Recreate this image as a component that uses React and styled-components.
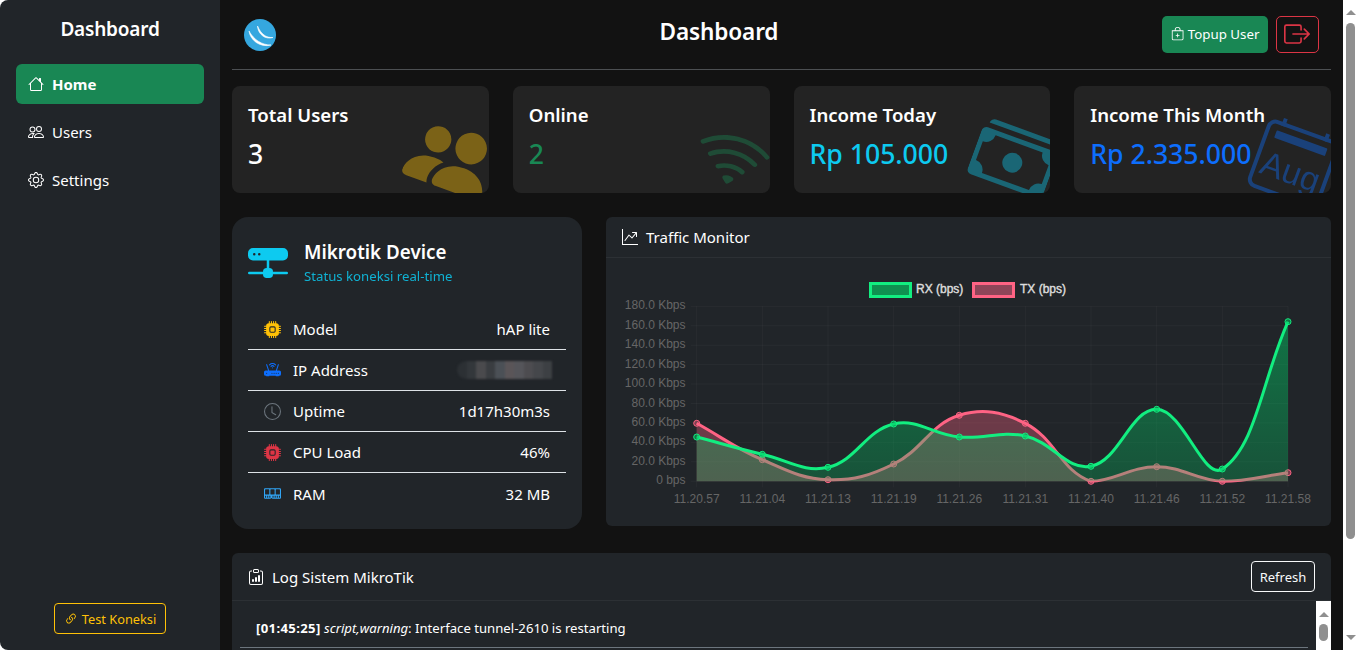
import React from 'react'
import styled, { createGlobalStyle } from 'styled-components'
import {
  BsHouse, BsPeople, BsGear, BsLink45Deg, BsBagPlus, BsBoxArrowRight, BsPeopleFill, BsWifi, BsCashStack,
  BsHddNetworkFill, BsCpuFill, BsRouterFill, BsClock, BsMemory, BsGraphUpArrow, BsClipboardData,
} from 'react-icons/bs'

const GlobalStyle = createGlobalStyle`
  html, body { margin: 0; height: 100%; background: #fff; overflow: hidden; }
  body { font-family: "Noto Sans", "Open Sans", sans-serif; color: #fff; font-size: 15px; }
  * { box-sizing: border-box; }
`

const Shell = styled.div`
  display: flex;
  height: 650px;
  border-radius: 8px 0 8px 8px;
  overflow: hidden;
`

const Sidebar = styled.aside`
  width: 220px;
  flex: none;
  background: #212529;
  display: flex;
  flex-direction: column;
  padding: 16px 16px 16px;
`

const Brand = styled.div`
  font-size: 19px;
  letter-spacing: -.2px;
  font-weight: 600;
  text-align: center;
  line-height: 26px;
  margin-bottom: 22px;
`

const NavItem = styled.a`
  display: flex;
  align-items: center;
  gap: 8px;
  height: 40px;
  padding: 0 12px;
  margin-bottom: 8px;
  border-radius: 6px;
  font-size: 15px;
  font-weight: ${p => (p.$active ? 700 : 400)};
  background: ${p => (p.$active ? '#198754' : 'transparent')};
  svg { font-size: 16px; }
`

const TestButton = styled.button`
  margin: auto auto 0;
  height: 31px;
  width: 112px;
  display: flex;
  align-items: center;
  justify-content: center;
  gap: 4px;
  background: transparent;
  border: 1px solid #ffc107;
  border-radius: 4px;
  color: #ffc107;
  font: 12.8px "Noto Sans", sans-serif;
  svg { font-size: 14px; }
`

const Main = styled.main`
  flex: 1;
  min-width: 0;
  height: 650px;
  overflow: hidden;
  background: #121212;
  padding: 0 12px 12px;
`

// the page scrollbar as the reference shows it
const ScrollBar = styled.div`
  flex: none;
  width: 15px;
  background: #fff;
  display: flex;
  flex-direction: column;
  align-items: center;
  height: ${p => (p.$h ? `${p.$h}px` : '100%')};
  padding-top: ${p => p.$pad}px;
`

const Arrow = styled.i`
  width: 0;
  height: 0;
  border-left: 5px solid transparent;
  border-right: 5px solid transparent;
  border-${p => (p.$down ? 'top' : 'bottom')}: 5px solid #8f8f8f;
  margin-top: ${p => (p.$down ? 'auto' : '0')};
  margin-bottom: ${p => (p.$down ? '10px' : '0')};
`

const Thumb = styled.i`
  width: 9px;
  border-radius: 5px;
  background: #8f8f8f;
  height: ${p => p.$h}px;
  margin-top: ${p => p.$top}px;
`

const Header = styled.header`
  display: flex;
  align-items: center;
  justify-content: space-between;
  height: 70px;
  padding: 0 12px;
  border-bottom: 1px solid #4c4f52;
  margin-bottom: 16px;
`

const PageTitle = styled.h1`
  margin: 0 0 6px;
  font-size: 22.6px;
  letter-spacing: -.15px;
  font-weight: 600;
`

const Actions = styled.div`
  display: flex;
  gap: 8px;
  margin-top: -1px;
`

const TopupButton = styled.button`
  height: 37px;
  width: 106px;
  display: flex;
  align-items: center;
  justify-content: center;
  gap: 4px;
  background: #198754;
  border: 0;
  border-radius: 5px;
  color: #fff;
  font: 13.3px "Noto Sans", sans-serif;
`

const LogoutButton = styled.button`
  height: 37px;
  width: 43px;
  display: flex;
  align-items: center;
  justify-content: center;
  background: transparent;
  border: 1px solid #dc3545;
  border-radius: 5px;
  color: #dc3545;
  font-size: 26px;
  padding: 0;
`

const StatGrid = styled.section`
  display: grid;
  grid-template-columns: repeat(4, 1fr);
  gap: 24px;
  margin-bottom: 24px;
`

const StatCard = styled.div`
  position: relative;
  overflow: hidden;
  height: 107px;
  padding: 16px;
  border-radius: 8px;
  background: #232323;
`

const StatTitle = styled.div`
  font-size: 18.6px;
  font-weight: 600;
  line-height: 26px;
`

const StatValue = styled.div`
  font-size: 26.6px;
  font-weight: 500;
  line-height: 38px;
  margin-top: 7px;
  color: ${p => p.$color};
  position: relative;
`

const StatIcon = styled.div`
  position: absolute;
  right: ${p => p.$right}px;
  bottom: ${p => p.$bottom}px;
  color: ${p => p.$color};
  opacity: .4;
  font-size: ${p => p.$size}px;
  line-height: 0;
  transform: rotate(${p => p.$rotate}deg);
`

const MiddleRow = styled.section`
  display: flex;
  align-items: flex-start;
  gap: 24px;
  margin-bottom: 24px;
`

const DeviceCard = styled.div`
  width: 350px;
  flex: none;
  height: 312px;
  padding: 16px;
  border-radius: 16px;
  background: #212529;
`

const DeviceHead = styled.div`
  display: flex;
  align-items: center;
  gap: 16px;
  margin-bottom: 23px;
  padding-top: 6px;
  svg { font-size: 40px; color: #0dcaf0; }
`

const DeviceName = styled.div`
  font-size: 18.8px;
  font-weight: 600;
  line-height: 26px;
`

const DeviceSub = styled.div`
  font-size: 13.2px;
  color: #0dcaf0;
  line-height: 20px;
  opacity: .85;
  margin-top: 1px;
`

const InfoRow = styled.div`
  display: flex;
  align-items: center;
  height: 41px;
  padding: 0 16px;
  border-bottom: ${p => (p.$last ? 'none' : '1px solid #dee2e6')};
  font-size: 15px;
`

const InfoIcon = styled.span`
  display: flex;
  color: ${p => p.$color};
  font-size: 17px;
  margin-right: 12px;
`

const InfoValue = styled.span`
  margin-left: auto;
`

const Masked = styled.span`
  margin-left: auto;
  margin-right: -2px;
  display: flex;
  height: 18px;
  width: 95px;
  filter: blur(.8px);
  border-radius: 9px 0 0 9px;
  overflow: hidden;
`

const MaskCell = styled.i`
  flex: 1;
  background: ${p => p.$c};
`

const ChartCard = styled.div`
  flex: 1;
  min-width: 0;
  border-radius: 6px;
  background: #212529;
`

const CardHeader = styled.div`
  display: flex;
  align-items: center;
  justify-content: space-between;
  padding: 0 16px;
  height: ${p => p.$h}px;
  border-bottom: 1px solid #2c3034;
  font-size: 15px;
`

const CardTitle = styled.div`
  display: flex;
  align-items: center;
  gap: 8px;
  svg { font-size: 16px; }
`

const ChartWrap = styled.div`
  padding: 16px 16px 0;
  svg { display: block; }
  text { font-family: "Liberation Sans", Arial, sans-serif; font-size: 12px; }
`

const LogCard = styled.div`
  border-radius: 6px;
  background: #212529;
`

const RefreshButton = styled.button`
  height: 31px;
  width: 64px;
  background: transparent;
  border: 1px solid #f8f9fa;
  border-radius: 4px;
  color: #f8f9fa;
  font: 13px "Noto Sans", sans-serif;
  padding: 0;
`

const LogBody = styled.div`
  display: flex;
  height: 200px;
`

const LogList = styled.div`
  flex: 1;
  min-width: 0;
  padding: 8px;
`

const LogRow = styled.div`
  padding: 8px 16px;
  line-height: 22px;
  font-size: 13.15px;
  border-bottom: 1px solid #6c757d;
  white-space: nowrap;
  b { font-weight: 700; letter-spacing: .35px; }
`

// chart is laid out in page pixels, shifted to the svg origin
const OX = 622
const OY = 274
const xs = [696.7, 762.3, 828, 893.7, 959.3, 1025.3, 1091, 1156.7, 1222.3, 1288]
const xLabels = ['11.20.57', '11.21.04', '11.21.13', '11.21.19', '11.21.26', '11.21.31', '11.21.40', '11.21.46', '11.21.52', '11.21.58']
const yLabels = ['180.0 Kbps', '160.0 Kbps', '140.0 Kbps', '120.0 Kbps', '100.0 Kbps', '80.0 Kbps', '60.0 Kbps', '40.0 Kbps', '20.0 Kbps', '0 bps']
const rx = [437, 454.3, 467.3, 424, 437, 436, 466.3, 409.3, 469, 321.7]
const tx = [423.3, 459.7, 479.7, 464, 415.3, 423.3, 481.3, 466.7, 481.3, 472.7]
const TOP = 306.3
const BOTTOM = 481.3

// same spline chart.js uses for tension .4
function splinePath(ys) {
  const pts = xs.map((x, i) => ({ x: x - OX, y: ys[i] - OY }))
  const bottom = BOTTOM - OY
  const ctrl = pts.map((p, i) => {
    const prev = pts[i - 1] || p
    const next = pts[i + 1] || p
    const d1 = Math.hypot(p.x - prev.x, p.y - prev.y)
    const d2 = Math.hypot(next.x - p.x, next.y - p.y)
    const sum = d1 + d2 || 1
    return {
      inX: p.x - 0.4 * (d1 / sum) * (next.x - prev.x),
      inY: Math.min(bottom, p.y - 0.4 * (d1 / sum) * (next.y - prev.y)),
      outX: p.x + 0.4 * (d2 / sum) * (next.x - prev.x),
      outY: Math.min(bottom, p.y + 0.4 * (d2 / sum) * (next.y - prev.y)),
    }
  })
  let d = `M${pts[0].x} ${pts[0].y}`
  for (let i = 1; i < pts.length; i++) {
    d += ` C${ctrl[i - 1].outX} ${ctrl[i - 1].outY} ${ctrl[i].inX} ${ctrl[i].inY} ${pts[i].x} ${pts[i].y}`
  }
  return d
}

const Series = ({ ys, color, fill, dot }) => {
  const line = splinePath(ys)
  const area = `${line} L${xs[9] - OX} ${BOTTOM - OY} L${xs[0] - OX} ${BOTTOM - OY} Z`
  return (
    <g>
      <path d={area} fill={fill} />
      <path d={line} fill="none" stroke={color} strokeWidth="3" />
      {ys.map((y, i) => (
        <circle key={i} cx={xs[i] - OX} cy={y - OY} r="3" fill={dot} stroke={color} strokeWidth="1" />
      ))}
    </g>
  )
}

const TrafficChart = () => (
  <svg width="693" height="252" viewBox="0 0 693 252">
    <defs>
      <linearGradient id="rxFill" gradientUnits="userSpaceOnUse" x1="0" y1={TOP - OY} x2="0" y2={BOTTOM - OY}>
        <stop offset="0" stopColor="#00c864" stopOpacity=".5" />
        <stop offset="1" stopColor="#00c864" stopOpacity=".28" />
      </linearGradient>
    </defs>
    {yLabels.map((_, i) => {
      const y = TOP - OY + i * 19.44
      return <line key={i} x1={xs[0] - OX - 6} x2={xs[9] - OX} y1={y} y2={y} stroke="#fff" strokeOpacity=".035" />
    })}
    {xs.map(x => (
      <line key={x} x1={x - OX} x2={x - OX} y1={TOP - OY} y2={BOTTOM - OY + 6} stroke="#fff" strokeOpacity=".035" />
    ))}
    <Series ys={tx} color="#ff6384" fill="rgba(255,99,132,.34)" dot="rgba(255,99,132,.4)" />
    <Series ys={rx} color="#12ee80" fill="url(#rxFill)" dot="rgba(0,200,100,.5)" />
    {yLabels.map((t, i) => (
      <text key={t} x={685.5 - OX} y={TOP - OY + i * 19.44 + 3} textAnchor="end" fill="#666">{t}</text>
    ))}
    {xLabels.map((t, i) => (
      <text key={t} x={xs[i] - OX} y={503 - OY} textAnchor="middle" fill="#666">{t}</text>
    ))}
    <rect x={870.5 - OX} y={283.5 - OY} width="40" height="13" fill="#0f9150" stroke="#12ee80" strokeWidth="3" />
    <text x={916 - OX} y={293 - OY} fill="#ddd" stroke="#ddd" strokeWidth=".4">RX (bps)</text>
    <rect x={973.5 - OX} y={283.5 - OY} width="40" height="13" fill="#8f4559" stroke="#ff6384" strokeWidth="3" />
    <text x={1020 - OX} y={293 - OY} fill="#ddd" stroke="#ddd" strokeWidth=".4">TX (bps)</text>
  </svg>
)

const Logo = () => (
  <svg width="32" height="32" viewBox="0 0 32 32">
    <circle cx="16" cy="16" r="16" fill="#35a7df" />
    <path d="M5 12 C6 21 16 29 27 26 C18 26 10 21 5 12 Z" fill="#fff" stroke="#fff" strokeWidth=".6" />
    <path d="M13.5 7 C14 15 21 21 29 18.5 C22 19 17 15 13.5 7 Z" fill="#fff" stroke="#fff" strokeWidth=".6" />
  </svg>
)

const CalendarAug = () => (
  <svg width="80" height="80" viewBox="0 0 80 80">
    <rect x="4" y="8" width="72" height="68" rx="7" fill="none" stroke="currentColor" strokeWidth="4" />
    <rect x="13" y="16" width="54" height="8" rx="1" fill="currentColor" />
    <rect x="15.5" y="2" width="4" height="8" fill="currentColor" />
    <rect x="60.5" y="2" width="4" height="8" fill="currentColor" />
    <text x="40" y="62" textAnchor="middle" fontSize="34" fontFamily="Liberation Sans, sans-serif" fill="currentColor">Aug</text>
  </svg>
)

const mask = ['#2c3034', '#33373b', '#4a4a4d', '#3a3d41', '#4b5056', '#5a5558', '#55555a', '#4d4c50', '#45474b', '#3d4044']

export default function App() {
  return (
    <>
      <GlobalStyle />
      <Shell>
        <Sidebar>
          <Brand>Dashboard</Brand>
          <NavItem $active><BsHouse /> Home</NavItem>
          <NavItem><BsPeople /> Users</NavItem>
          <NavItem><BsGear /> Settings</NavItem>
          <TestButton><BsLink45Deg /> Test Koneksi</TestButton>
        </Sidebar>
        <Main>
          <Header>
            <Logo />
            <PageTitle>Dashboard</PageTitle>
            <Actions>
              <TopupButton><BsBagPlus /> Topup User</TopupButton>
              <LogoutButton><BsBoxArrowRight /></LogoutButton>
            </Actions>
          </Header>

          <StatGrid>
            <StatCard>
              <StatIcon $color="#ffc107" $size={84} $right={-4} $bottom={-7} $rotate={20}><BsPeopleFill /></StatIcon>
              <StatTitle>Total Users</StatTitle>
              <StatValue $color="#fff">3</StatValue>
            </StatCard>
            <StatCard>
              <StatIcon $color="#198754" $size={75} $right={0} $bottom={-4} $rotate={14}><BsWifi /></StatIcon>
              <StatTitle>Online</StatTitle>
              <StatValue $color="#198754">2</StatValue>
            </StatCard>
            <StatCard>
              <StatIcon $color="#0dcaf0" $size={80} $right={-4} $bottom={-5} $rotate={20}><BsCashStack /></StatIcon>
              <StatTitle>Income Today</StatTitle>
              <StatValue $color="#0dcaf0">Rp 105.000</StatValue>
            </StatCard>
            <StatCard>
              <StatIcon $color="#0d6efd" $size={80} $right={-3} $bottom={-9} $rotate={20}><CalendarAug /></StatIcon>
              <StatTitle>Income This Month</StatTitle>
              <StatValue $color="#0d6efd">Rp 2.335.000</StatValue>
            </StatCard>
          </StatGrid>

          <MiddleRow>
            <DeviceCard>
              <DeviceHead>
                <BsHddNetworkFill />
                <div>
                  <DeviceName>Mikrotik Device</DeviceName>
                  <DeviceSub>Status koneksi real-time</DeviceSub>
                </div>
              </DeviceHead>
              <InfoRow><InfoIcon $color="#ffc107"><BsCpuFill /></InfoIcon>Model<InfoValue>hAP lite</InfoValue></InfoRow>
              <InfoRow>
                <InfoIcon $color="#0d6efd"><BsRouterFill /></InfoIcon>IP Address
                <Masked>{mask.map((c, i) => <MaskCell key={i} $c={c} />)}</Masked>
              </InfoRow>
              <InfoRow><InfoIcon $color="#6c757d"><BsClock /></InfoIcon>Uptime<InfoValue>1d17h30m3s</InfoValue></InfoRow>
              <InfoRow><InfoIcon $color="#dc3545"><BsCpuFill /></InfoIcon>CPU Load<InfoValue>46%</InfoValue></InfoRow>
              <InfoRow $last><InfoIcon $color="#31a5f5"><BsMemory /></InfoIcon>RAM<InfoValue>32 MB</InfoValue></InfoRow>
            </DeviceCard>

            <ChartCard>
              <CardHeader $h={41}>
                <CardTitle><BsGraphUpArrow /> Traffic Monitor</CardTitle>
              </CardHeader>
              <ChartWrap><TrafficChart /></ChartWrap>
            </ChartCard>
          </MiddleRow>

          <LogCard>
            <CardHeader $h={48}>
              <CardTitle><BsClipboardData /> Log Sistem MikroTik</CardTitle>
              <RefreshButton>Refresh</RefreshButton>
            </CardHeader>
            <LogBody>
              <LogList>
                <LogRow><b>[01:45:25]</b> <em>script,warning</em>: Interface tunnel-2610 is restarting</LogRow>
              </LogList>
              <ScrollBar $h={200} $pad={11}>
                <Arrow />
                <Thumb $h={17} $top={7} />
              </ScrollBar>
            </LogBody>
          </LogCard>
        </Main>
        <ScrollBar $pad={10}>
          <Arrow />
          <Thumb $h={516} $top={8} />
          <Arrow $down />
        </ScrollBar>
      </Shell>
    </>
  )
}
